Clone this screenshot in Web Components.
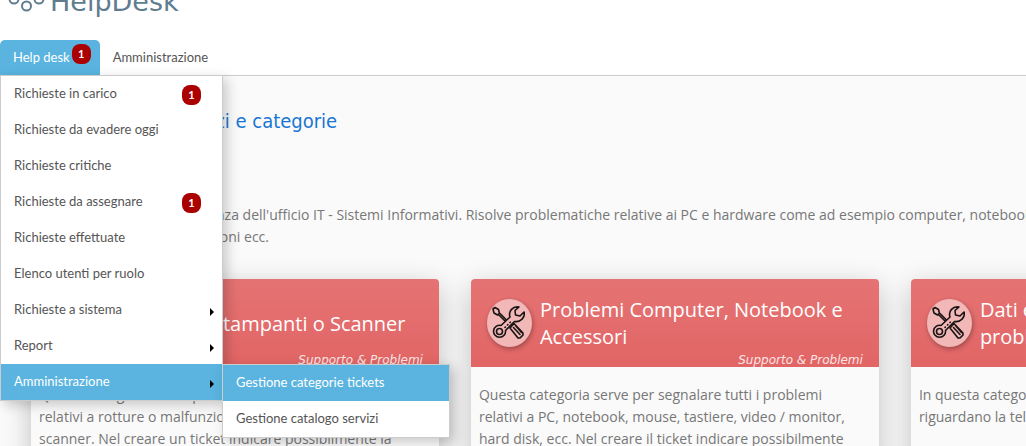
<!DOCTYPE html>
<html lang="it">
<head>
<meta charset="utf-8">
<meta name="viewport" content="width=device-width, initial-scale=1">
<title>HelpDesk</title>
<style>
  body {
    margin: 0;
    min-height: 100vh;
    overflow: hidden;
    background-color: #fafafa;
    color: #777;
    font-family: 'Open Sans', sans-serif;
  }
</style>
</head>
<body>
<desk-header></desk-header>
<desk-nav>
  <desk-tab label="Help desk" count="1" active>
    <desk-menu>
      <desk-item label="Richieste in carico" count="1"></desk-item>
      <desk-item label="Richieste da evadere oggi"></desk-item>
      <desk-item label="Richieste critiche"></desk-item>
      <desk-item label="Richieste da assegnare" count="1"></desk-item>
      <desk-item label="Richieste effettuate"></desk-item>
      <desk-item label="Elenco utenti per ruolo"></desk-item>
      <desk-item label="Richieste a sistema" arrow></desk-item>
      <desk-item label="Report" arrow></desk-item>
      <desk-item label="Amministrazione" arrow active>
        <desk-menu>
          <desk-item label="Gestione categorie tickets" active></desk-item>
          <desk-item label="Gestione catalogo servizi"></desk-item>
        </desk-menu>
      </desk-item>
    </desk-menu>
  </desk-tab>
  <desk-tab label="Amministrazione"></desk-tab>
</desk-nav>
<desk-page>
  <span slot="title">Gestione nuovi servizi e categorie</span>
  <span slot="intro">Tutte le richieste di competenza dell'ufficio IT - Sistemi Informativi. Risolve problematiche relative ai PC e hardware come ad esempio computer, notebook,<br>stampanti, scanner, applicazioni ecc.</span>
  <category-card label="Problemi di Stampanti o Scanner" group="Supporto &amp; Problemi">
    Questa categoria serve per segnalare tutti i problemi relativi a rotture o malfunzionamenti di stampanti o scanner. Nel creare un ticket indicare possibilmente la
  </category-card>
  <category-card label="Problemi Computer, Notebook e Accessori" group="Supporto &amp; Problemi">
    Questa categoria serve per segnalare tutti i problemi relativi a PC, notebook, mouse, tastiere, video / monitor, hard disk, ecc. Nel creare il ticket indicare possibilmente
  </category-card>
  <category-card label="Dati e Telefonia, richieste e problemi" group="Supporto &amp; Problemi">
    In questa categoria rientrano tutte le segnalazioni che riguardano la telefonia
  </category-card>
</desk-page>

<script>
class DeskHeader extends HTMLElement {
  constructor() {
    super();
    this.attachShadow({ mode: 'open' })
  }

  connectedCallback() {
    this.shadowRoot.innerHTML = `
      <style>
        :host {
          display: block;
          height: 40px;
          overflow: hidden;
          background-color: #fff;
        }

        .brand {
          display: flex;
          align-items: center;
          gap: 4px;
          height: 36px;
          margin-top: -16px;
          padding-left: 8px;
          font: 27px/36px 'DejaVu Sans', sans-serif;
          color: #607d8f;
        }
      </style>
      <div class="brand">
        <svg width="38" height="36" viewBox="0 0 38 36" fill="none" stroke="#607d8f" stroke-width="2" aria-hidden="true">
          <circle cx="6" cy="15" r="4.5"/>
          <circle cx="18.5" cy="22" r="4.5"/>
          <circle cx="31" cy="15" r="4.5"/>
        </svg>
        <span>HelpDesk</span>
      </div>
    `
  }
}

class DeskNav extends HTMLElement {
  constructor() {
    super();
    this.attachShadow({ mode: 'open' })
  }

  connectedCallback() {
    this.shadowRoot.innerHTML = `
      <style>
        :host {
          display: block;
          background-color: #fff;
          border-bottom: 1px solid #ccc;
          font: 13px/18px Lato, sans-serif;
        }

        nav {
          display: flex;
        }
      </style>
      <nav><slot></slot></nav>
    `
  }
}

class DeskBadge extends HTMLElement {
  constructor() {
    super();
    this.attachShadow({ mode: 'open' })
  }

  connectedCallback() {
    this.shadowRoot.innerHTML = `
      <style>
        :host {
          display: block;
          box-sizing: border-box;
          min-width: 19px;
          height: 20px;
          border-radius: 8px;
          background-color: #a00;
          color: #fff;
          font: bold 11px/20px Lato, sans-serif;
          text-align: center;
        }
      </style>
      <slot></slot>
    `
  }
}

class DeskTab extends HTMLElement {
  constructor() {
    super();
    this.attachShadow({ mode: 'open' })
  }

  connectedCallback() {
    const count = this.getAttribute('count')
    this.shadowRoot.innerHTML = `
      <style>
        :host {
          display: block;
          position: relative;
        }

        a {
          display: flex;
          align-items: center;
          gap: 2px;
          height: 35px;
          padding: 0 13px 2px;
          box-sizing: border-box;
          color: #555;
          text-decoration: none;
        }

        :host([active]) a {
          padding-right: 9px;
          border-radius: 5px 5px 0 0;
          background-color: #5ab4df;
          color: #fff;
        }

        desk-badge {
          margin-bottom: 6px;
        }

        ::slotted(desk-menu) {
          position: absolute;
          z-index: 2;
          top: 100%;
          left: 0;
          width: 221px;
        }
      </style>
      <a href="#">${this.getAttribute('label')}${count ? `<desk-badge>${count}</desk-badge>` : ''}</a>
      <slot></slot>
    `
  }
}

class DeskMenu extends HTMLElement {
  constructor() {
    super();
    this.attachShadow({ mode: 'open' })
  }

  connectedCallback() {
    this.shadowRoot.innerHTML = `
      <style>
        :host {
          display: block;
          border: 1px solid #ccc;
          background-color: #fff;
          box-shadow: 4px 4px 12px rgba(0, 0, 0, 0.2);
        }
      </style>
      <slot></slot>
    `
  }
}

class DeskItem extends HTMLElement {
  constructor() {
    super();
    this.attachShadow({ mode: 'open' })
  }

  connectedCallback() {
    const count = this.getAttribute('count')
    this.shadowRoot.innerHTML = `
      <style>
        :host {
          display: block;
          position: relative;
        }

        a {
          display: flex;
          align-items: center;
          justify-content: space-between;
          height: 36px;
          padding: 0 8px 2px 13px;
          box-sizing: border-box;
          color: #555;
          text-decoration: none;
        }

        :host([active]) a {
          background-color: #5ab4df;
          color: #fff;
        }

        desk-badge {
          margin: 4px 13px 0 0;
        }

        svg {
          margin-top: 6px;
        }

        ::slotted(desk-menu) {
          position: absolute;
          z-index: 3;
          top: 0;
          left: 100%;
          width: 226px;
        }
      </style>
      <a href="#">
        <span>${this.getAttribute('label')}</span>
        ${count ? `<desk-badge>${count}</desk-badge>` : ''}
        ${this.hasAttribute('arrow') ? '<svg width="4" height="8" viewBox="0 0 4 8" aria-hidden="true"><path d="M0 0l4 4-4 4z" fill="#000"/></svg>' : ''}
      </a>
      <slot></slot>
    `
  }
}

class DeskPage extends HTMLElement {
  constructor() {
    super();
    this.attachShadow({ mode: 'open' })
  }

  connectedCallback() {
    this.shadowRoot.innerHTML = `
      <style>
        :host {
          display: block;
          padding: 28px 0 0 31px;
          overflow: hidden;
        }

        h1 {
          margin: 0;
          font: 20px/34px 'DejaVu Sans Condensed', Roboto, sans-serif;
          color: #1976d2;
        }

        p {
          margin: 66px 0 31px;
          font-size: 14px;
          line-height: 22px;
          white-space: nowrap;
        }

        .cards {
          display: grid;
          grid-auto-flow: column;
          grid-auto-columns: 41%;
          gap: 32px;
        }
      </style>
      <h1><slot name="title"></slot></h1>
      <p><slot name="intro"></slot></p>
      <section class="cards"><slot></slot></section>
    `
  }
}

class CategoryCard extends HTMLElement {
  constructor() {
    super();
    this.attachShadow({ mode: 'open' })
  }

  connectedCallback() {
    this.shadowRoot.innerHTML = `
      <style>
        :host {
          display: block;
          border-radius: 4px;
          background-color: #fafafa;
          box-shadow: 0 8px 28px rgba(0, 0, 0, 0.24);
        }

        header {
          display: grid;
          grid-template-columns: 45px 1fr;
          grid-template-rows: 74px 14px;
          column-gap: 8px;
          align-items: center;
          padding: 0 16px;
          border-radius: 4px 4px 0 0;
          background: linear-gradient(#e57373, #e26565);
          color: #fff;
        }

        .icon {
          display: flex;
          align-items: center;
          justify-content: center;
          grid-row: 1 / 3;
          grid-column: 1;
          width: 45px;
          height: 48px;
          border-radius: 50%;
          background-color: #f2b8b8;
          box-shadow: 1px 2px 5px rgba(0, 0, 0, 0.3);
        }

        h2 {
          grid-row: 1 / 3;
          grid-column: 2;
          margin: 0;
          font-weight: 400;
          font-size: 20px;
          line-height: 27px;
        }

        em {
          grid-row: 2;
          grid-column: 1 / 3;
          justify-self: end;
          font: italic 12px/14px 'DejaVu Sans', sans-serif;
          color: #fbe4e4;
        }

        p {
          margin: 0;
          padding: 17px 16px 17px 8px;
          font-size: 14px;
          line-height: 22px;
        }
      </style>
      <header>
        <div class="icon">
          <svg width="34" height="34" viewBox="0 0 34 34" fill="none" stroke="#1a1414" stroke-width="1.6" stroke-linejoin="round" stroke-linecap="round" aria-hidden="true">
            <path d="M1 3l2-1.500 3.500 2 1 4-2 1.500-3.500-2zM6.500 8.500l8 8M8 7.500l8 8"/>
            <path d="M18 22l4-4.500 9 9.500v2l-3 3h-2zM21.500 21.500l6.500 7M23.500 19.500l6 7"/>
            <path fill="#f2b8b8" d="M27 1c-6-1-11 4-9 10l-9 8.500a6 6 0 1 0 4.500 5l9-9c6 1 11-4 9.500-9.500l-4 4-4.500-1-.5-4.500z"/>
            <circle cx="7.500" cy="25.500" r="3"/>
            <path stroke-dasharray="0.500 3" d="M13 21.500l7-7"/>
          </svg>
        </div>
        <h2>${this.getAttribute('label')}</h2>
        <em></em>
      </header>
      <p><slot></slot></p>
    `
    this.shadowRoot.querySelector('em').textContent = this.getAttribute('group')
  }
}

customElements.define('desk-header', DeskHeader)
customElements.define('desk-nav', DeskNav)
customElements.define('desk-badge', DeskBadge)
customElements.define('desk-tab', DeskTab)
customElements.define('desk-menu', DeskMenu)
customElements.define('desk-item', DeskItem)
customElements.define('desk-page', DeskPage)
customElements.define('category-card', CategoryCard)
</script>
</body>
</html>
